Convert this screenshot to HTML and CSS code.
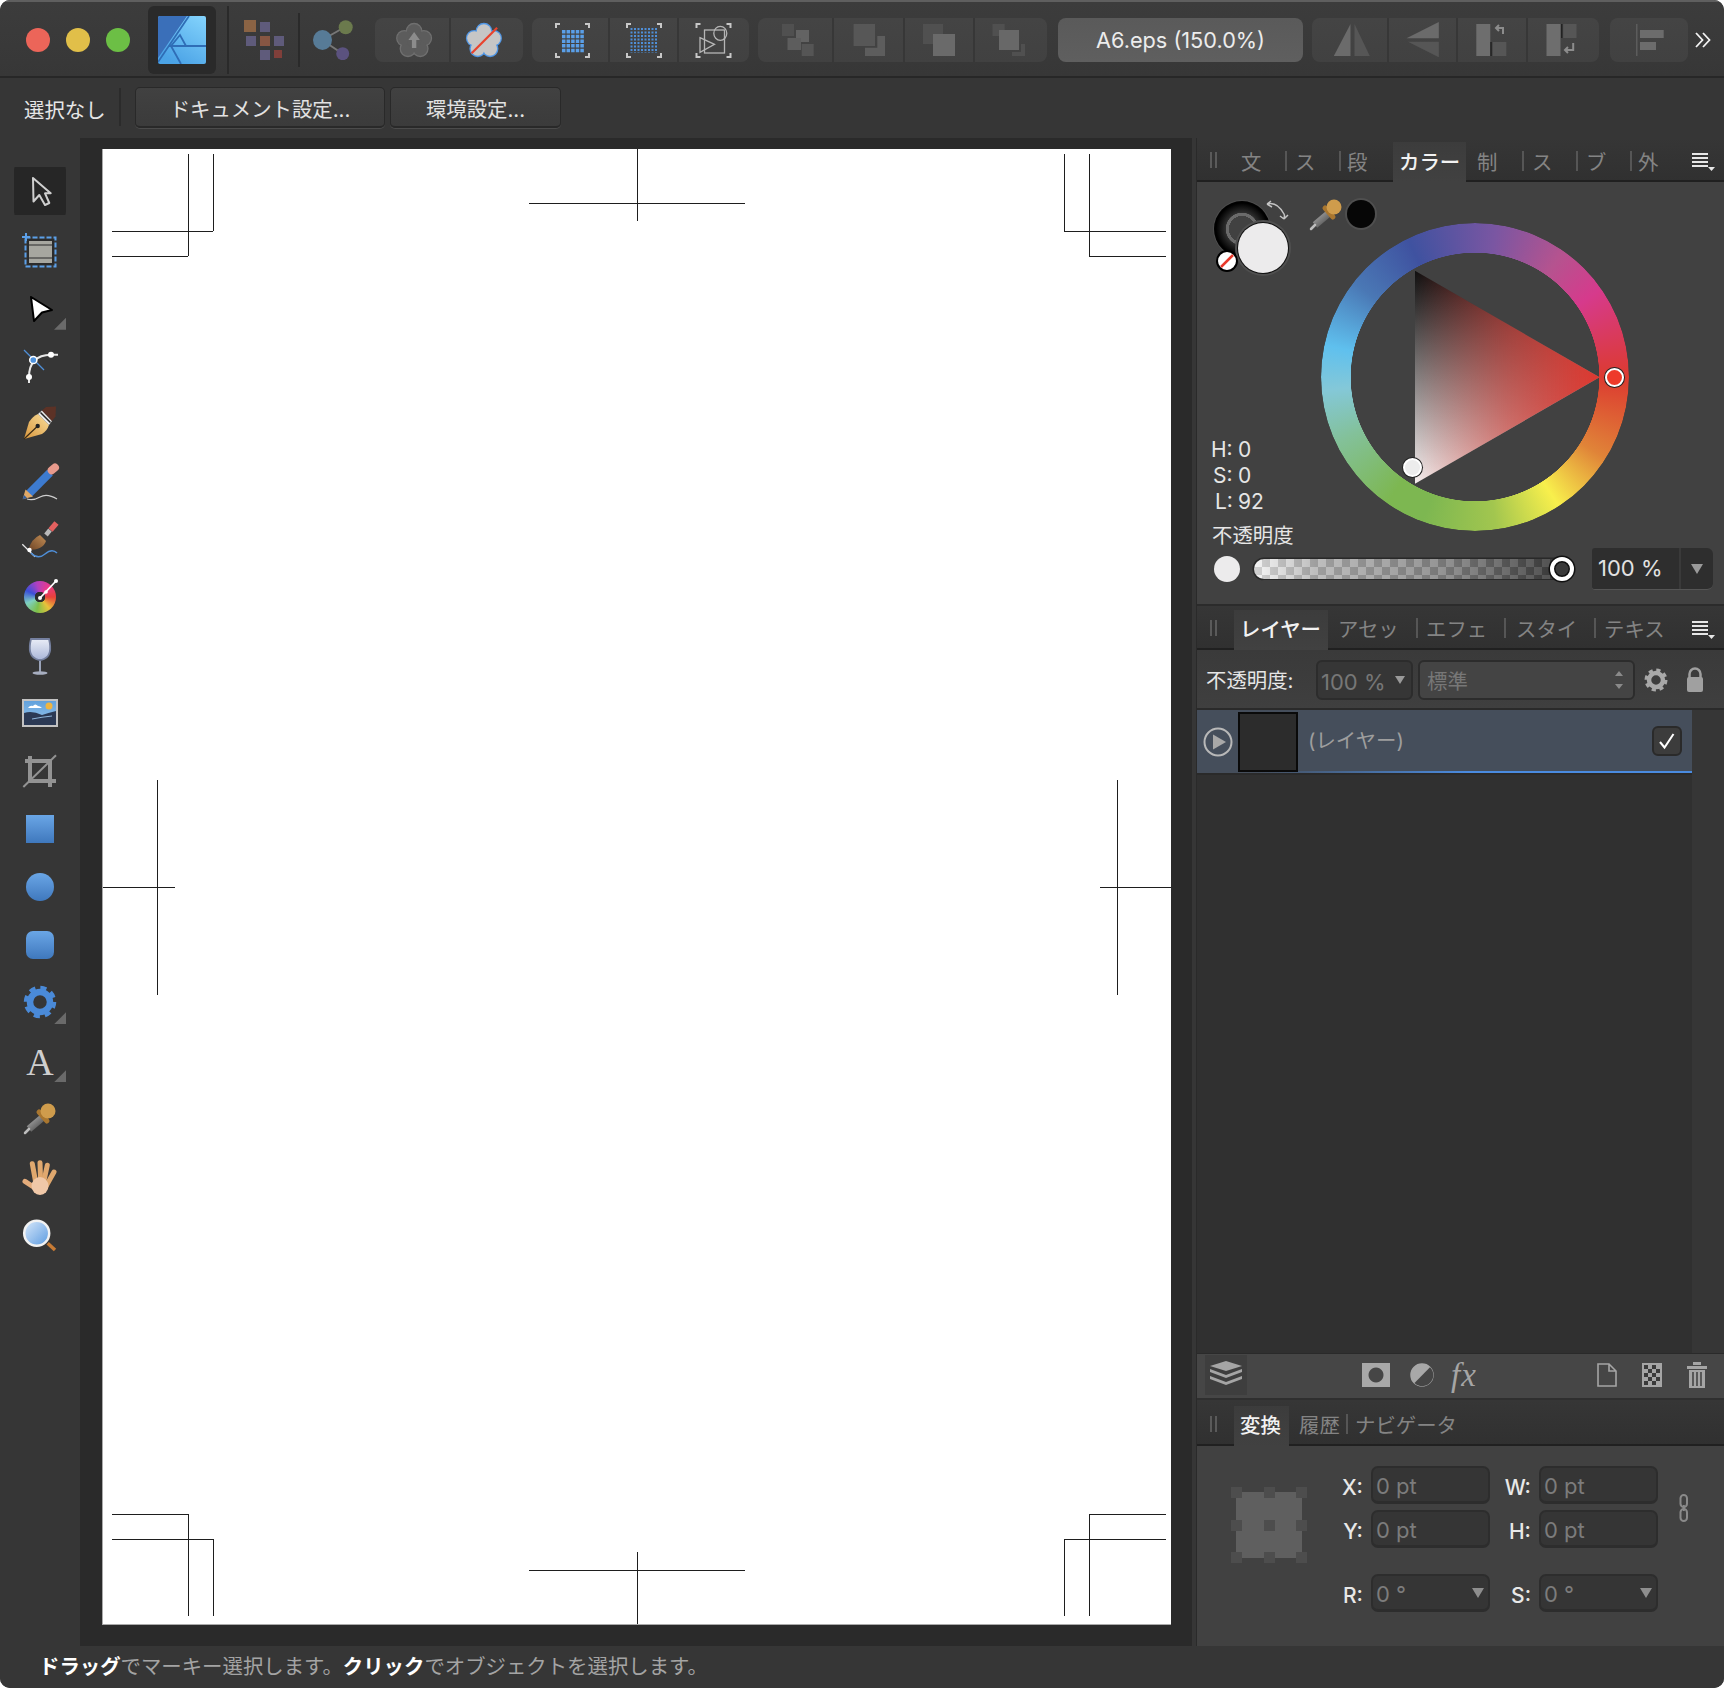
FILE: index.html
```html
<!DOCTYPE html>
<html lang="ja">
<head>
<meta charset="utf-8">
<title>Affinity Designer</title>
<link rel="stylesheet" href="styles.css">
</head>
<body>
<svg class="defs" aria-hidden="true">
  <defs>
    <linearGradient id="gBlue" x1="0" y1="0" x2="0" y2="1"><stop offset="0" stop-color="#6aa6e6"/><stop offset="1" stop-color="#3f78bd"/></linearGradient>
    <linearGradient id="gLogo" x1="1" y1="0" x2="0.4" y2="1"><stop offset="0" stop-color="#84d4fd"/><stop offset="1" stop-color="#4ba3e6"/></linearGradient>
    <linearGradient id="gGold" x1="1" y1="0" x2="0" y2="1"><stop offset="0" stop-color="#f8dd9a"/><stop offset="1" stop-color="#d9963c"/></linearGradient>
    <linearGradient id="gBrown" x1="1" y1="0" x2="0" y2="1"><stop offset="0" stop-color="#c28d55"/><stop offset="1" stop-color="#6e4526"/></linearGradient>
    <linearGradient id="gGlass" x1="0" y1="0" x2="0" y2="1"><stop offset="0" stop-color="#e9edf7"/><stop offset="1" stop-color="#aab6d8"/></linearGradient>
    <linearGradient id="gLens" x1="0" y1="0" x2="1" y2="1"><stop offset="0" stop-color="#d9e9fb"/><stop offset="1" stop-color="#5a9ae0"/></linearGradient>
    <linearGradient id="gSky" x1="0" y1="0" x2="0" y2="1"><stop offset="0" stop-color="#5e9fdc"/><stop offset="1" stop-color="#9cc8ec"/></linearGradient>
    <linearGradient id="gTube" x1="0" y1="0" x2="1" y2="1"><stop offset="0" stop-color="#a8a8a8"/><stop offset="1" stop-color="#4c4c4c"/></linearGradient>
    <symbol id="dropper" viewBox="0 0 44 44">
      <path d="M24 22 11 33" stroke="url(#gTube)" stroke-width="7"/>
      <path d="M11 33 7 37" stroke="#bdbdbd" stroke-width="2.5" stroke-linecap="round"/>
      <path d="M21 16 29 25" stroke="#a9762f" stroke-width="5" stroke-linecap="round"/>
      <circle cx="30" cy="15" r="7.5" fill="#cf9c4c"/>
    </symbol>
    <symbol id="menuicon" viewBox="0 0 24 20">
      <path d="M1 2h16M1 6h16M1 10h16M1 14h16" stroke="#e6e6e6" stroke-width="2"/>
      <path d="M17 15h7l-3.500 4z" fill="#e6e6e6"/>
    </symbol>
    <symbol id="grip" viewBox="0 0 8 16">
      <path d="M1 0v16M6 0v16" stroke="#5a5a5a" stroke-width="2"/>
    </symbol>
  </defs>
</svg>

<div class="app">
  <header class="toolbar">
    <div class="lights"><i class="light red"></i><i class="light yellow"></i><i class="light green"></i></div>
    <div class="logo-btn">
      <svg width="48" height="48" viewBox="0 0 48 48">
        <rect width="48" height="48" rx="2" fill="url(#gLogo)"/>
        <path d="M0 2a2 2 0 0 1 2-2H29L0 42z" fill="#3a6fb9"/>
        <path d="M0 46 31 0M11 30H48M13 30l9-11 6 11M13 30l10 18" fill="none" stroke="#2f6db6" stroke-width="1.800"/>
      </svg>
    </div>
    <i class="tb-sep tall"></i>
    <svg class="persona" width="40" height="40" viewBox="244 18 40 40">
      <rect x="244" y="18" width="12" height="12" fill="#8a6344"/>
      <rect x="260" y="20" width="10" height="10" fill="#5f5b7b"/>
      <rect x="246" y="34" width="10" height="10" fill="#5f5b7b"/>
      <rect x="260" y="34" width="10" height="10" fill="#875643"/>
      <rect x="274" y="34" width="10" height="10" fill="#5f5b7b"/>
      <rect x="260" y="48" width="10" height="10" fill="#5f5b7b"/>
      <rect x="274" y="48" width="8" height="8" fill="#803f3a"/>
    </svg>
    <i class="tb-sep short"></i>
    <svg class="share" width="40" height="40" viewBox="314 18 40 40">
      <path d="M323 38 346 25M323 38 344 52" stroke="#777" stroke-width="2"/>
      <ellipse cx="323.500" cy="38" rx="9.500" ry="10" fill="#577b97"/>
      <circle cx="346.700" cy="25.300" r="7" fill="#6b7a4d"/>
      <circle cx="343.700" cy="51.700" r="6.500" fill="#5b527f"/>
    </svg>

    <div class="group g1">
      <div class="tb-btn w74">
        <svg width="44" height="44" viewBox="-5.400 -3 50 50">
          <g fill="#5c5c5c" stroke="#6f6f6f" stroke-width="3"><circle cx="22" cy="12" r="8"/><circle cx="33" cy="20" r="8"/><circle cx="29" cy="32" r="8"/><circle cx="15" cy="32" r="8"/><circle cx="11" cy="20" r="8"/></g>
          <g fill="#5c5c5c"><circle cx="22" cy="12" r="8"/><circle cx="33" cy="20" r="8"/><circle cx="29" cy="32" r="8"/><circle cx="15" cy="32" r="8"/><circle cx="11" cy="20" r="8"/><circle cx="22" cy="23" r="8"/></g>
          <path d="M22 13l6.500 9H24.500v9h-5V22H15.500z" fill="#8c8c8c"/>
        </svg>
      </div>
      <div class="tb-btn w74">
        <svg width="44" height="44" viewBox="0.500 -3 50 50">
          <g fill="#c6c6c6" stroke="#4f96e6" stroke-width="3"><circle cx="22" cy="12" r="8"/><circle cx="33" cy="20" r="8"/><circle cx="29" cy="32" r="8"/><circle cx="15" cy="32" r="8"/><circle cx="11" cy="20" r="8"/></g>
          <g fill="#c6c6c6"><circle cx="22" cy="12" r="8"/><circle cx="33" cy="20" r="8"/><circle cx="29" cy="32" r="8"/><circle cx="15" cy="32" r="8"/><circle cx="11" cy="20" r="8"/><circle cx="22" cy="23" r="8"/></g>
          <path d="M8 37 37 8" stroke="#e8432e" stroke-width="2.500"/>
        </svg>
      </div>
    </div>

    <div class="group g2">
      <div class="tb-btn w76">
        <svg width="44" height="44" viewBox="0 0 44 44">
          <path d="M8 10V6h4M37 6h4v4M41 35v4h-4M12 39H8v-4" fill="none" stroke="#c8c8c8" stroke-width="2"/>
          <path d="M15.700 12v23M20.300 12v23M24.900 12v23M29.500 12v23M34.100 12v23" stroke="#5a9fe8" stroke-width="3.500" stroke-dasharray="3.500 1.200"/>
        </svg>
      </div>
      <div class="tb-btn w69">
        <svg width="44" height="44" viewBox="0.500 0 44 44">
          <path d="M5.500 10V6h4M35.500 6h4v4M39.500 35v4h-4M9.500 39h-4v-4" fill="none" stroke="#c8c8c8" stroke-width="2"/>
          <path d="M10 10v25M13.500 10v25M17 10v25M20.500 10v25M24 10v25M27.500 10v25M31 10v25M34.500 10v25" stroke="#4f8fd8" stroke-width="2" stroke-dasharray="2 1.500"/>
        </svg>
      </div>
      <div class="tb-btn w72">
        <svg width="44" height="44" viewBox="0.500 0 44 44">
          <path d="M5 10V6h4M35 6h4v4M39 35v4h-4M9 39H5v-4" fill="none" stroke="#c8c8c8" stroke-width="2"/>
          <g fill="none" stroke="#b5b5b5" stroke-width="1.300"><rect x="13" y="12" width="20" height="23"/><ellipse cx="28.800" cy="15.300" rx="6.500" ry="7"/><path d="M8.500 19.700 23 26.300 8.500 34.300z"/></g>
        </svg>
      </div>
    </div>

    <div class="group g3">
      <div class="tb-btn w74">
        <svg width="44" height="44" viewBox="0 0 44 44"><rect x="9" y="6" width="12" height="12" fill="#505050"/><rect x="23" y="12" width="13" height="12" fill="#636363"/><rect x="14.500" y="20" width="13.500" height="12" fill="#5d5d5d"/><rect x="28.700" y="26" width="12" height="12" fill="#555"/></svg>
      </div>
      <div class="tb-btn w71">
        <svg width="44" height="44" viewBox="0 0 44 44"><rect x="6.600" y="6" width="21.400" height="22" fill="#575757"/><path d="M30.300 18H38V38H18V29.700H30.300z" fill="#5d5d5d"/></svg>
      </div>
      <div class="tb-btn w70">
        <svg width="44" height="44" viewBox="0 0 44 44"><rect x="6" y="6" width="20" height="20" fill="#505050"/><rect x="16" y="16" width="22" height="22" fill="#6a6a6a"/></svg>
      </div>
      <div class="tb-btn w74">
        <svg width="44" height="44" viewBox="0 0 44 44"><path d="M3.500 6H15.700V12H10V18H3.500z" fill="#505050"/><rect x="10" y="12" width="20" height="20" fill="#686868"/><path d="M32 26H36V38H23V34H32z" fill="#505050"/></svg>
      </div>
    </div>

    <div class="title">A6.eps (150.0%)</div>

    <div class="group g4">
      <div class="tb-btn w75">
        <svg width="44" height="44" viewBox="0 0 44 44"><path d="M22.500 6V38H5.800z" fill="#6b6b6b"/><path d="M26.500 6 41.800 38H26.500z" fill="#565656"/></svg>
      </div>
      <div class="tb-btn w69">
        <svg width="44" height="44" viewBox="0 0 44 44"><path d="M37.800 4V20.300H5.500z" fill="#6b6b6b"/><path d="M37.800 23.700V39.300L7 23.700z" fill="#565656"/></svg>
      </div>
      <div class="tb-btn w70">
        <svg width="44" height="44" viewBox="0 0 44 44"><rect x="6.300" y="6" width="14" height="32" fill="#6e6e6e"/><rect x="20.300" y="24" width="1.500" height="14" fill="#222"/><rect x="22.700" y="24" width="13.600" height="14" fill="#565656"/><path d="M33 16V10H26M29 7 26 10 29 13" fill="none" stroke="#8c8c8c" stroke-width="2"/></svg>
      </div>
      <div class="tb-btn w73">
        <svg width="44" height="44" viewBox="0 0 44 44"><rect x="4.500" y="6" width="14" height="32" fill="#6e6e6e"/><rect x="19" y="6" width="1.500" height="14" fill="#222"/><rect x="21.200" y="6" width="13.300" height="14" fill="#565656"/><path d="M31.200 25V32H23M26 29 23 32 26 35" fill="none" stroke="#8c8c8c" stroke-width="2"/></svg>
      </div>
    </div>
    <div class="group g5">
      <div class="tb-btn w78">
        <svg width="44" height="44" viewBox="0 0 44 44"><rect x="9" y="6" width="1.500" height="32" fill="#5c5c5c"/><rect x="13" y="12" width="23.700" height="8" fill="#6c6c6c"/><rect x="13" y="24" width="16" height="8" fill="#6c6c6c"/></svg>
      </div>
    </div>
    <svg class="more" width="16" height="16" viewBox="0 0 16 16"><path d="M1 1l6.500 7L1 15M8 1l6.500 7L8 15" fill="none" stroke="#f2f2f2" stroke-width="1.800"/></svg>
  </header>

  <div class="context">
    <span class="ctx-label">選択なし</span>
    <i class="ctx-sep"></i>
    <button class="ctx-btn doc">ドキュメント設定...</button>
    <button class="ctx-btn pref">環境設定...</button>
  </div>

  <aside class="tools">
    <div class="tool selected first">
      <svg width="44" height="44" viewBox="0 0 44 44"><path d="M15 9 15.500 32.500 21.300 26 27 36 31.300 34 27 24.300 32.700 24.300z" fill="none" stroke="#cfcfcf" stroke-width="2" stroke-linejoin="round"/></svg>
    </div>
    <div class="tool">
      <svg width="44" height="44" viewBox="0 -2 44 44"><rect x="7.500" y="7.500" width="30" height="29" fill="none" stroke="#5b9fe8" stroke-width="2" stroke-dasharray="5 2"/><path d="M8 3v8M4 7h8" stroke="#5b9fe8" stroke-width="2"/><rect x="10" y="10" width="25" height="24" fill="#a7a7a0" stroke="#2b2b2b" stroke-width="2"/><path d="M11 15h23M11 28h23" stroke="#2b2b2b" stroke-width="1.200"/></svg>
    </div>
    <div class="tool">
      <svg width="44" height="44" viewBox="0 -2 44 44"><path d="M13 9 34 22 24 24.500 16 33z" fill="#fff" stroke="#000" stroke-width="2" stroke-linejoin="round"/></svg>
      <i class="corner"></i>
    </div>
    <div class="tool">
      <svg width="44" height="44" viewBox="0 0 44 44"><path d="M6 6 26 26" stroke="#4f8fd8" stroke-width="1.300"/><path d="M11 39V33Q11 11 33 10.700H40" fill="none" stroke="#e8e8e8" stroke-width="2"/><circle cx="11" cy="33" r="3" fill="#fff"/><circle cx="33" cy="10.700" r="3" fill="#fff"/><circle cx="15.300" cy="16" r="3.600" fill="#4f93de" stroke="#fff" stroke-width="1.500"/></svg>
    </div>
    <div class="tool">
      <svg width="44" height="44" viewBox="0 1 44 44"><path d="M6 38 11 21Q15 15 20 13L31 24Q29 30 24 33Z" fill="url(#gGold)"/><path d="M6 38 19.700 25" stroke="#3a2a14" stroke-width="1.200"/><circle cx="19.700" cy="25" r="2.200" fill="#222"/><path d="M20 13 31 24 34 20 24 9.500z" fill="#e9e9e9"/><path d="M22.500 11.500 32.500 21.500" stroke="#222" stroke-width="1.500"/><path d="M24 9.500 28 6 38 5.500 37.500 15.500 34 20z" fill="#5c3226"/></svg>
    </div>
    <div class="tool">
      <svg width="44" height="44" viewBox="0 -2 44 44"><path d="M10.300 33.300 32 11.700" stroke="#3d7bd0" stroke-width="8"/><path d="M33.700 9.300 37 6.500" stroke="#e89a8c" stroke-width="8" stroke-linecap="round"/><path d="M4.700 38.300 7.500 28.500 15 35.500z" fill="#e0a866"/><path d="M4.700 38.300 6 34 9 37z" fill="#2f5da0"/><path d="M9 38Q15 40 22 36T39 38" fill="none" stroke="#cfcfcf" stroke-width="1.200"/></svg>
    </div>
    <div class="tool">
      <svg width="44" height="44" viewBox="0 0 44 44"><path d="M28 18 32 13" stroke="#b9b9b9" stroke-width="4.500"/><path d="M32.500 13 38.500 6" stroke="#e4605f" stroke-width="5.500"/><path d="M10.500 33Q13 22 22 18L28 24Q25 33 10.500 33Z" fill="url(#gBrown)"/><path d="M4.300 27.300 17 39.700" stroke="#e8e8e8" stroke-width="1.200"/><circle cx="11.500" cy="33" r="2.200" fill="#fff"/><path d="M13 36Q20 43 27 37T39 36" fill="none" stroke="#4f8fd8" stroke-width="1.500"/></svg>
    </div>
    <div class="tool">
      <div class="mini-wheel"></div>
      <svg class="mini-needle" width="44" height="44" viewBox="0 0 44 44"><path d="M22 23 38 6" stroke="#fff" stroke-width="1.800"/><circle cx="22" cy="23" r="2" fill="#fff"/><circle cx="28" cy="17" r="1.800" fill="#fff"/><circle cx="38" cy="6" r="2" fill="#fff"/></svg>
    </div>
    <div class="tool">
      <svg width="44" height="44" viewBox="0 0 44 44"><path d="M13 6Q9 22 18 26Q22 28 26 26Q35 22 31 6Z" fill="url(#gGlass)" stroke="#75809f" stroke-width="1.800"/><path d="M22 28V39" stroke="#9aa3b8" stroke-width="2"/><ellipse cx="22" cy="40" rx="7.500" ry="1.800" fill="#a7aec0"/></svg>
    </div>
    <div class="tool">
      <svg width="44" height="44" viewBox="0 0 44 44"><rect x="5" y="9" width="34" height="26" fill="url(#gSky)" stroke="#c2c2c2" stroke-width="2"/><circle cx="31" cy="15" r="3.500" fill="#f0b541"/><path d="M10 17Q12 14 15 15 17 12 20 15 22 15 24 17z" fill="#fff"/><path d="M6 22Q14 19 24 24 30 22 38 20V34H6z" fill="#2b3954"/><path d="M14 28Q24 26 34 25" stroke="#8fb6dc" stroke-width="1"/></svg>
    </div>
    <div class="tool">
      <svg width="44" height="44" viewBox="0 0 44 44"><path d="M12 7V32H38M7 12H32V38" fill="none" stroke="#939393" stroke-width="4"/><path d="M5.300 38 38 6.300" stroke="#939393" stroke-width="2"/></svg>
    </div>
    <div class="tool"><i class="shape square"></i></div>
    <div class="tool"><i class="shape circle"></i></div>
    <div class="tool"><i class="shape rounded"></i></div>
    <div class="tool">
      <svg width="44" height="44" viewBox="0 0 44 44"><circle cx="22" cy="22" r="13" fill="none" stroke="#4a8ad8" stroke-width="6.500" stroke-dasharray="5.600 4.600"/><circle cx="22" cy="22" r="10" fill="none" stroke="#4a8ad8" stroke-width="6.500"/></svg>
      <i class="corner"></i>
    </div>
    <div class="tool"><span class="tool-a">A</span><i class="corner"></i></div>
    <div class="tool"><svg width="44" height="44"><use href="#dropper"/></svg></div>
    <div class="tool">
      <svg width="44" height="44" viewBox="0 -2 44 44"><g fill="none" stroke="#e0a86e" stroke-width="5" stroke-linecap="round"><path d="M7 25.300 17 32" stroke="#e4ac7c"/><path d="M14.300 7.700 18 27.700"/><path d="M22 6.700 22.700 27.700"/><path d="M29.300 9.300 25.300 27.700"/><path d="M36 16 28 30.300"/></g><ellipse cx="22" cy="30" rx="8.500" ry="9" fill="#f0c8a8"/></svg>
    </div>
    <div class="tool">
      <svg width="44" height="44" viewBox="0 -1 44 44"><path d="M29.700 30.300 37 37" stroke="#c77b35" stroke-width="3.500"/><circle cx="18.700" cy="20.300" r="12.500" fill="url(#gLens)" stroke="#f2f2f2" stroke-width="2.500"/></svg>
    </div>
  </aside>

  <main class="canvas">
    <div class="page">
      <svg class="marks" viewBox="103 149 1068 1475" shape-rendering="crispEdges">
        <g stroke="#1e1e1e" stroke-width="1" fill="none">
          <path d="M188 154V256M213 154V231M112 231H213M112 256H188"/>
          <path d="M637 149V221M529 203H745"/>
          <path d="M1064 154V231M1089 154V256M1064 231H1166M1089 256H1166"/>
          <path d="M157 780V995M103 887H175"/>
          <path d="M1117 780V995M1100 887H1171"/>
          <path d="M188 1514V1616M213 1539V1616M112 1514H188M112 1539H213"/>
          <path d="M637 1552V1624M529 1570H745"/>
          <path d="M1064 1539V1616M1089 1514V1616M1089 1514H1166M1064 1539H1166"/>
        </g>
      </svg>
    </div>
  </main>

  <div class="gutter"></div>

  <section class="panels">
    <div class="tabbar">
      <svg class="grip" width="8" height="16"><use href="#grip"/></svg>
      <div class="tab s">文</div><div class="tab s">ス</div><div class="tab s p6">段</div>
      <div class="tab active w73">カラー</div>
      <div class="tab s wide p11">制</div><div class="tab s">ス</div><div class="tab s">ブ</div><div class="tab last p6">外</div>
      <svg class="menu" width="24" height="20"><use href="#menuicon"/></svg>
    </div>

    <div class="colour">
      <div class="cp-top">
        <div class="cp-left">
          <div class="cp-swatches">
            <div class="well">
              <i class="stroke-ring"></i>
              <i class="fill-disc"></i>
              <svg class="none-badge" width="24" height="24" viewBox="0 0 24 24"><circle cx="12" cy="12" r="10" fill="#fff" stroke="#000" stroke-width="2"/><path d="M6 18 18 6" stroke="#e8392b" stroke-width="2.500"/></svg>
              <svg class="swap" width="26" height="26" viewBox="0 0 26 26"><path d="M3 6 Q13 3 20 16M3 6l4-3M3 6l5 3M20 20 Q21 18 20 16M20 21l-4-3M20 21l4-4" fill="none" stroke="#c4c4c4" stroke-width="1.500"/></svg>
            </div>
            <svg class="cp-dropper" width="44" height="44"><use href="#dropper"/></svg>
            <i class="black-dot"></i>
          </div>
          <div class="hsl">
            <div class="hsl-row"><span>H:</span><b>0</b></div>
            <div class="hsl-row s"><span>S:</span><b>0</b></div>
            <div class="hsl-row l"><span>L:</span><b>92</b></div>
          </div>
        </div>
        <div class="wheel-wrap">
          <div class="wheel"></div>
          <div class="triangle"></div>
          <i class="wheel-thumb"></i>
          <i class="tri-thumb"></i>
        </div>
      </div>
      <div class="cp-label">不透明度</div>
      <div class="cp-opacity">
        <i class="op-dot"></i>
        <div class="slider"><i class="slider-thumb"></i></div>
        <div class="op-input"><span class="op-val">100 %</span><span class="op-drop"><i class="tri"></i></span></div>
      </div>
    </div>

    <div class="tabbar second">
      <svg class="grip" width="8" height="16"><use href="#grip"/></svg>
      <div class="tab active w94">レイヤー</div>
      <div class="tab w90 p10">アセッ</div><div class="tab w88">エフェ</div><div class="tab w90 p10">スタイ</div><div class="tab last">テキス</div>
      <svg class="menu" width="24" height="20"><use href="#menuicon"/></svg>
    </div>

    <div class="layer-opts">
      <span class="lo-label">不透明度:</span>
      <div class="select dim w97"><span>100 %</span><i class="tri small"></i></div>
      <div class="select w217"><span>標準</span>
        <svg class="updown" width="10" height="22" viewBox="0 0 10 22"><path d="M1 7 5 2 9 7zM1 15 5 20 9 15z" fill="#8a8a8a"/></svg>
      </div>
      <svg class="lo-gear" width="26" height="26" viewBox="0 0 26 26"><circle cx="13" cy="13" r="9.500" fill="none" stroke="#a8a8a8" stroke-width="4" stroke-dasharray="4 3.460"/><circle cx="13" cy="13" r="7" fill="none" stroke="#a8a8a8" stroke-width="4.500"/></svg>
      <svg class="lo-lock" width="20" height="26" viewBox="0 0 20 26"><path d="M4.500 11V7a5.500 5.500 0 0 1 11 0v4" fill="none" stroke="#a0a0a0" stroke-width="2.500"/><rect x="2" y="10" width="16" height="15" rx="2" fill="#a0a0a0"/></svg>
    </div>

    <div class="layers">
      <div class="layers-col">
        <div class="layer-row">
          <svg class="play" width="30" height="30" viewBox="0 0 30 30"><circle cx="15" cy="15" r="13.500" fill="none" stroke="#b8b8b8" stroke-width="2"/><path d="M10 7.500 23 15 10 22.500z" fill="#a8a8a8"/></svg>
          <div class="thumb"></div>
          <span class="layer-name">(レイヤー)</span>
          <div class="check"><svg width="18" height="18" viewBox="0 0 18 18"><path d="M2 10 6.500 15.500 15.500 2" fill="none" stroke="#fff" stroke-width="2"/></svg></div>
        </div>
      </div>
      <div class="scroll-gutter"></div>
    </div>

    <div class="layer-foot">
      <div class="stack-btn">
        <svg width="34" height="28" viewBox="0 0 34 28"><g fill="#a5a5a5"><path d="M1 5 17 0 33 5 17 10z"/><path d="M1 8v3l16 6 16-6V8L17 14z"/><path d="M1 15v3l16 6 16-6v-3l-16 6z"/></g></svg>
      </div>
      <svg class="f-mask" width="28" height="24" viewBox="0 0 28 24"><path fill-rule="evenodd" d="M0 0H28V24H0zM14 4.500a7.500 7.500 0 1 0 .01 0z" fill="#a8a8a8"/></svg>
      <svg class="f-adj" width="24" height="24" viewBox="0 0 24 24"><circle cx="12" cy="12" r="11" fill="#a8a8a8" stroke="#a8a8a8" stroke-width="1.500"/><path d="M20 4.200A11 11 0 0 1 4.500 20z" fill="#454545"/></svg>
      <span class="f-fx">fx</span>
      <svg class="f-doc" width="20" height="24" viewBox="0 0 20 24"><path d="M1 1H12L19 8V23H1zM12 1V8H19" fill="none" stroke="#a5a5a5" stroke-width="1.600"/></svg>
      <svg class="f-check" width="20" height="24" viewBox="0 0 20 24"><rect width="20" height="24" fill="#a5a5a5"/><path d="M2 2h4v4H2zM10 2h4v4h-4zM6 6h4v4H6zM14 6h4v4h-4zM2 10h4v4H2zM10 10h4v4h-4zM6 14h4v4H6zM14 14h4v4h-4zM2 18h4v4H2zM10 18h4v4h-4z" fill="#3a3a3a"/></svg>
      <svg class="f-trash" width="20" height="26" viewBox="0 0 20 26"><path d="M0 4H20V7H0zM6 0H14V3H6z" fill="#a5a5a5"/><path d="M2 8H18V26H2z" fill="#a5a5a5"/><path d="M6 10V24M10 10V24M14 10V24" stroke="#454545" stroke-width="1.600"/></svg>
    </div>

    <div class="tabbar third">
      <svg class="grip" width="8" height="16"><use href="#grip"/></svg>
      <div class="tab active w55">変換</div>
      <div class="tab w59 p9">履歴</div><div class="tab last p7">ナビゲータ</div>
    </div>

    <div class="transform">
      <svg class="anchor" width="76" height="76" viewBox="0 0 76 76">
        <rect x="5" y="5" width="66" height="66" fill="#5f5f5f"/>
        <g fill="#4d4d4d"><rect width="11" height="11"/><rect x="33" width="11" height="11"/><rect x="65" width="11" height="11"/><rect y="33" width="11" height="11"/><rect x="33" y="33" width="11" height="11"/><rect x="65" y="33" width="11" height="11"/><rect y="65" width="11" height="11"/><rect x="33" y="65" width="11" height="11"/><rect x="65" y="65" width="11" height="11"/></g>
      </svg>
      <div class="fields">
        <label class="f-label">X:</label><div class="field">0 pt</div>
        <label class="f-label">W:</label><div class="field">0 pt</div>
        <label class="f-label">Y:</label><div class="field">0 pt</div>
        <label class="f-label">H:</label><div class="field">0 pt</div>
        <label class="f-label r3">R:</label><div class="field r3"><span>0 °</span><i class="tri"></i></div>
        <label class="f-label r3">S:</label><div class="field r3"><span>0 °</span><i class="tri"></i></div>
      </div>
      <svg class="link" width="10" height="28" viewBox="0 0 10 28"><rect x="1.500" y="1" width="6.500" height="12" rx="3.250" fill="none" stroke="#8a8a8a" stroke-width="2"/><rect x="1.500" y="15" width="6.500" height="12" rx="3.250" fill="none" stroke="#8a8a8a" stroke-width="2"/><path d="M4.800 11V17" stroke="#8a8a8a" stroke-width="2"/></svg>
    </div>
  </section>

  <footer class="status"><b>ドラッグ</b>でマーキー選択します。<b>クリック</b>でオブジェクトを選択します。</footer>
</div>
</body>
</html>
```

FILE: styles.css
```css
* { box-sizing: border-box; }
html, body { margin: 0; padding: 0; }
body {
  background: #fff;
  width: 1724px;
  height: 1688px;
  overflow: hidden;
  font-family: Inter, "Noto Sans CJK JP", sans-serif;
  font-size: 20.4px;
  color: #e6e6e6;
}
i { display: block; font-style: normal; }
svg { display: block; flex: none; }
.defs { position: absolute; width: 0; height: 0; }

.app {
  width: 1724px;
  height: 1688px;
  border-radius: 10px;
  overflow: hidden;
  background: #363636;
  display: grid;
  grid-template-columns: 80px 1112px 4px 528px;
  grid-template-rows: 78px 60px 1508px 42px;
}

/* toolbar */
.toolbar {
  grid-column: 1 / -1;
  display: flex;
  align-items: center;
  padding-top: 2px;
  border-top: 2px solid #5f5f5f;
  border-bottom: 2px solid #272727;
  background: linear-gradient(#3c3c3c, #373737);
}
.lights { display: flex; gap: 16px; margin-left: 26px; }
.light { width: 24px; height: 24px; border-radius: 50%; }
.red { background: #ec6559; }
.yellow { background: #e1bf49; }
.green { background: #6cbf45; }
.logo-btn {
  width: 68px;
  height: 68px;
  margin-left: 18px;
  background: #2a2a2a;
  border-radius: 6px;
  display: flex;
  align-items: center;
  justify-content: center;
}
.tb-sep { width: 2px; background: #2a2a2a; }
.tb-sep.tall { height: 68px; margin-left: 11px; }
.tb-sep.short { height: 54px; margin-left: 14px; }
.persona { margin-left: 15px; }
.share { margin-left: 13px; }
.group {
  display: flex;
  height: 44px;
  border-radius: 8px;
  overflow: hidden;
  background: linear-gradient(#444, #414141);
}
.g1 { margin-left: 22px; }
.g2 { margin-left: 9px; }
.g3 { margin-left: 9px; }
.g4 { margin-left: 9px; }
.g5 { margin-left: 11px; }
.tb-btn {
  display: flex;
  align-items: center;
  justify-content: center;
  border-left: 2px solid #373737;
}
.tb-btn:first-child { border-left: 0; }
.w74 { width: 74px; }
.w76 { width: 76px; }
.w69 { width: 69px; }
.w72 { width: 72px; }
.w71 { width: 71px; }
.w70 { width: 70px; }
.w75 { width: 75px; }
.w73 { width: 73px; }
.w78 { width: 78px; }
.title {
  width: 245px;
  height: 44px;
  margin-left: 11px;
  border-radius: 8px;
  background: linear-gradient(#5a5a5a, #5f5f5f);
  color: #ececec;
  font-size: 21.700px;
  line-height: 45px;
  text-align: center;
}
.more { margin-left: 7px; }

/* context bar */
.context {
  grid-column: 1 / -1;
  display: flex;
  align-items: center;
  padding-bottom: 2px;
  background: #363636;
}
.ctx-label { margin: 3px 0 0 24px; width: 81px; white-space: nowrap; }
.ctx-sep { width: 2px; height: 38px; margin-left: 14px; background: #2b2b2b; }
.ctx-btn {
  height: 41px;
  padding: 3px 0 0;
  font: inherit;
  color: #e2e2e2;
  background: linear-gradient(#414141, #3b3b3b);
  border: 1px solid #292929;
  border-bottom-width: 2px;
  border-radius: 5px;
  box-shadow: 0 1px 0 #4b4b4b;
}
.ctx-btn.doc { width: 250px; margin-left: 14px; }
.ctx-btn.pref { width: 171px; margin-left: 5px; }

/* tools */
.tools {
  padding-top: 24px;
  background: #363636;
}
.tool {
  position: relative;
  width: 52px;
  height: 57.9px;
  margin-left: 14px;
  display: flex;
  align-items: center;
  justify-content: center;
}
.tool.first { margin-bottom: 1px; }
.tool.selected { background: linear-gradient(transparent 5px, #262626 5px, #262626 53px, transparent 53px); border-radius: 8px; }
.corner {
  position: absolute;
  right: 0;
  bottom: 7px;
  width: 12px;
  height: 12px;
  background: #6a6a6a;
  clip-path: polygon(100% 0, 100% 100%, 0 100%);
}
.shape { width: 28px; height: 28px; background: linear-gradient(#6aa6e6, #3f78bd); }
.shape.circle { border-radius: 50%; }
.shape.rounded { border-radius: 7px; }
.tool-a { font-family: "Liberation Serif", serif; font-size: 38px; line-height: 44px; color: #cfcfcf; padding-top: 4px; }
.mini-wheel {
  width: 32px;
  height: 32px;
  border-radius: 50%;
  background:
    radial-gradient(circle, #2c2c2c 0 5px, transparent 5.5px),
    conic-gradient(from 90deg, #e8413a, #e8c23a, #7cc04c, #7fd0c0, #3a50d8, #b040c0, #e83a8c, #e8413a);
}
.mini-needle { position: absolute; left: 4px; top: 7px; }

/* canvas */
.canvas {
  background: #2a2a2a;
  padding: 11px 0 0 22px;
}
.page {
  width: 1069px;
  height: 1476px;
  background: #fff;
  border-left: 1px solid #aaa;
  border-bottom: 1px solid #aaa;
}
.marks { width: 1068px; height: 1475px; }
.gutter { background: #363636; }

/* right panels */
.panels {
  border-left: 1px solid #2a2a2a;
  display: flex;
  flex-direction: column;
  background: #333;
}
.tabbar {
  height: 44px;
  display: flex;
  align-items: stretch;
  padding-top: 4px;
  background: linear-gradient(#363636, #303030);
  box-shadow: inset 0 -2px 0 #202020;
  flex: none;
}
.tabbar.third { height: 46px; padding-top: 6px; }
.second .tab, .third .tab { padding-bottom: 4px; }
.grip { margin: 10px 0 0 13px; width: 8px; height: 16px; }
.tabbar .grip + .tab { margin-left: 16px; }
.tabbar .grip + .tab.s { margin-left: 15px; }
.tab {
  display: flex;
  align-items: center;
  padding-left: 8px;
  padding-bottom: 2px;
  color: #848484;
  white-space: nowrap;
}
.tab.s { width: 54px; }
.tab.s.p6 { width: 52px; }
.tab.s.wide { width: 58px; }
.tab.s::after, .tab.w90::after, .tab.w88::after, .tab.w59::after {
  content: "";
  margin-left: auto;
  width: 2px;
  height: 20px;
  background: #565656;
}
.tab.p6 { padding-left: 6px; }
.tab.p6.s::after { background: transparent; }
.tab.p7 { padding-left: 7px; }
.tab.p9 { padding-left: 10px; }
.tab.p10 { padding-left: 10px; }
.tab.p11 { padding-left: 11px; }
.tab.w90 { width: 90px; }
.tab.w88 { width: 88px; }
.tab.w94 { width: 94px; }
.tab.w55 { width: 55px; }
.tab.w59 { width: 59px; }
.tab.active {
  background: linear-gradient(#3c3c3c, #414141);
  color: #f2f2f2;
  padding-left: 6px;
  font-weight: 500;
}
.tab.active.w94 { padding-left: 6px; }
.tab.last { flex: 1; }
.menu { margin: 10px 9px 0 0; }

/* colour */
.colour {
  height: 424px;
  flex: none;
  background: #414141;
  border-bottom: 2px solid #2b2b2b;
}
.cp-top { display: grid; height: 341px; }
.cp-left, .wheel-wrap { grid-area: 1 / 1; }
.cp-left {
  display: flex;
  flex-direction: column;
  justify-content: space-between;
  padding: 16px 0 16px 14px;
  z-index: 1;
}
.cp-swatches { display: flex; align-items: flex-start; }
.well { position: relative; left: 1px; width: 78px; height: 78px; flex: none; }
.stroke-ring {
  position: absolute;
  left: 2px;
  top: 3px;
  width: 56px;
  height: 56px;
  border-radius: 50%;
  background: radial-gradient(circle at 50% 50%, transparent 0 13px, #6a6a6a 13px 16px, #2e2e2e 16.5px, #000 26px);
  box-shadow: 0 0 0 1px #4d4d4d;
}
.fill-disc {
  position: absolute;
  left: 26px;
  top: 25px;
  width: 50px;
  height: 50px;
  border-radius: 50%;
  background: #ecebec;
  box-shadow: 0 0 0 1px #111, 0 0 0 3px #4f4f4f;
}
.none-badge { position: absolute; left: 3px; top: 51px; }
.swap { position: absolute; left: 52px; top: 0; }
.cp-dropper { margin: -6px 0 0 15px; }
.black-dot {
  width: 28px;
  height: 28px;
  margin: 2px 0 0 -1px;
  border-radius: 50%;
  background: #060606;
  box-shadow: 0 0 0 2px #4f4f4f;
}
.hsl-row { display: flex; height: 26px; line-height: 26px; font-size: 21px; }
.hsl-row span { width: 27px; }
.hsl-row.s span { padding-left: 2px; }
.hsl-row.l span { padding-left: 4px; }
.hsl-row b { font-weight: 400; }
.wheel-wrap {
  position: relative;
  width: 308px;
  height: 308px;
  margin: 41px 0 0 124px;
}
.wheel {
  width: 100%;
  height: 100%;
  border-radius: 50%;
  background: conic-gradient(from 90deg,
    #dc3a30 0deg, #e08438 32deg, #f8ef4c 57deg, #a2c64f 82deg, #7db751 110deg,
    #7db751 125deg, #83c19a 155deg, #84c8d8 175deg, #5fc0ee 192deg, #4a78b5 218deg, #3f52a0 244deg,
    #7a56a2 278deg, #b5538f 305deg, #d63a8c 325deg, #dc3a30 360deg);
  -webkit-mask: radial-gradient(circle, transparent 124px, #000 124.5px);
  mask: radial-gradient(circle, transparent 124px, #000 124.5px);
}
.triangle {
  position: absolute;
  left: 93.500px;
  top: 47.500px;
  width: 185px;
  height: 213.500px;
  clip-path: polygon(0 0, 100% 50%, 0 100%);
  background:
    linear-gradient(90deg, rgba(222,56,48,0), rgba(222,56,48,.55) 50%, #de3830),
    linear-gradient(#0f0f0f, #f6f0f0);
}
.wheel-thumb, .tri-thumb {
  position: absolute;
  width: 19px;
  height: 19px;
  border-radius: 50%;
  box-shadow: 0 0 0 1px #222;
  border: 2px solid #fff;
}
.wheel-thumb { left: 284px; top: 144.500px; background: #ee3a2a; }
.tri-thumb { left: 82px; top: 235px; background: #ececec; }
.cp-label { height: 25px; line-height: 25px; padding-left: 15px; }
.cp-opacity { display: flex; align-items: center; height: 42px; padding-left: 17px; }
.op-dot { width: 26px; height: 26px; border-radius: 50%; background: #ecebec; }
.slider {
  position: relative;
  width: 310px;
  height: 20px;
  margin-left: 14px;
  border-radius: 10px;
  background:
    repeating-conic-gradient(rgba(0,0,0,.14) 0 25%, rgba(255,255,255,.08) 0 50%) 0 0 / 16px 16px,
    linear-gradient(90deg, #f4f4f4, #b8b8b8 20%, #8c8c8c 60%, #3c3c3c);
  box-shadow: 0 0 0 1.500px #292929, 0 2px 0 #5a5a5a;
}
.slider-thumb {
  position: absolute;
  right: -10px;
  top: -2px;
  width: 24px;
  height: 24px;
  border-radius: 50%;
  background: #3a3a3a;
  border: 4px solid #fff;
  box-shadow: 0 0 0 1.500px #111, inset 0 0 0 1.500px #111;
}
.op-input {
  width: 121px;
  height: 42px;
  margin-left: 28px;
  display: flex;
  background: #2e2e2e;
  border-radius: 3px 6px 6px 3px;
  border-bottom: 1px solid #555;
}
.op-val { width: 87px; padding-left: 6px; font-size: 22px; line-height: 40px; color: #e2e2e2; }
.op-drop { flex: 1; border-left: 2px solid #3a3a3a; display: flex; align-items: center; justify-content: center; }
.tri { width: 0; height: 0; border-left: 6px solid transparent; border-right: 6px solid transparent; border-top: 10px solid #9a9a9a; }
.tri.small { border-left-width: 5px; border-right-width: 5px; border-top-width: 8px; }

/* layers */
.layer-opts {
  height: 60px;
  flex: none;
  display: flex;
  align-items: center;
  padding-top: 2px;
  background: linear-gradient(#3a3a3a, #3f3f3f);
  border-bottom: 2px solid #2a2a2a;
}
.lo-label { margin: 0 0 2px 9px; width: 110px; }
.select {
  height: 40px;
  margin-right: 5px;
  border-radius: 6px;
  border: 2px solid #2c2c2c;
  display: flex;
  align-items: center;
  justify-content: space-between;
  padding: 0 9px 0 7px;
  color: #777;
}
.select.dim { background: #363636; font-size: 22px; padding: 0 6px 0 3px; }
.select.dim span { padding-top: 3px; }
.select.w97 { width: 97px; }
.select.w217 { width: 217px; background: #444; }
.lo-gear { margin-left: 3px; }
.lo-lock { margin-left: 16px; }
.layers {
  flex: 1;
  display: flex;
  min-height: 0;
}
.layers-col {
  width: 495px;
  background: #303030;
}
.scroll-gutter { flex: 1; background: #363636; }
.layer-row {
  height: 63px;
  display: flex;
  align-items: center;
  background:
    linear-gradient(90deg, rgba(74,139,224,0) 12%, #4a8be0 55%) 0 100% / 100% 2px no-repeat,
    #454e5b;
  box-shadow: 0 2px 0 #2a2a2a;
}
.play { margin-left: 6px; }
.thumb { width: 60px; height: 60px; margin-left: 5px; background: #2c2c2c; border: 2px solid #0a0a0a; }
.layer-name { margin: 0 0 6px 10px; color: #9e9e9e; }
.check {
  margin: 0 10px 2px auto;
  width: 30px;
  height: 30px;
  display: flex;
  align-items: center;
  justify-content: center;
  background: #3c3c3c;
  border: 2px solid #2a2a2a;
  border-radius: 6px;
}
.layer-foot {
  height: 47px;
  flex: none;
  display: flex;
  align-items: center;
  padding-bottom: 3px;
  background: #464646;
  border-top: 1px solid #2a2a2a;
  border-bottom: 2px solid #2f2f2f;
}
.stack-btn {
  width: 42px;
  height: 40px;
  margin-left: 8px;
  background: #3e3e3e;
  display: flex;
  align-items: center;
  justify-content: center;
}
.f-mask { margin-left: 115px; }
.f-adj { margin-left: 20px; }
.f-fx { margin-left: 17px; width: 30px; font-family: "Liberation Serif", serif; font-style: italic; font-size: 33px; line-height: 30px; letter-spacing: 1px; color: #a5a5a5; }
.f-doc { margin-left: 116px; }
.f-check { margin-left: 25px; }
.f-trash { margin-left: 25px; }

/* transform */
.transform {
  height: 200px;
  flex: none;
  display: flex;
  align-items: flex-start;
  background: #414141;
}
.anchor { margin: 41px 0 0 34px; }
.fields {
  margin: 20px 0 0 23px;
  display: grid;
  grid-template-columns: 33px 119px 33px 119px;
  column-gap: 8px;
  row-gap: 6px;
}
.f-label { height: 38px; line-height: 44px; font-size: 21px; font-weight: 500; text-align: right; color: #e8e8e8; white-space: nowrap; }
.field {
  height: 38px;
  display: flex;
  align-items: center;
  justify-content: space-between;
  padding: 3px 4px 0 3px;
  color: #7c7c7c;
  font-size: 22px;
  background: #353535;
  border: 2px solid #2d2d2d;
  border-radius: 7px;
  border-bottom-width: 3px;
}
.r3 { margin-top: 20px; }
.field .tri { border-top-color: #8e8e8e; margin-bottom: 3px; }
.link { margin: 48px 0 0 21px; }

/* status */
.status {
  grid-column: 1 / -1;
  padding-left: 39px;
  line-height: 42px;
  color: #a4a4a4;
  background: #363636;
}
.status b { color: #fff; font-weight: 700; }
```
